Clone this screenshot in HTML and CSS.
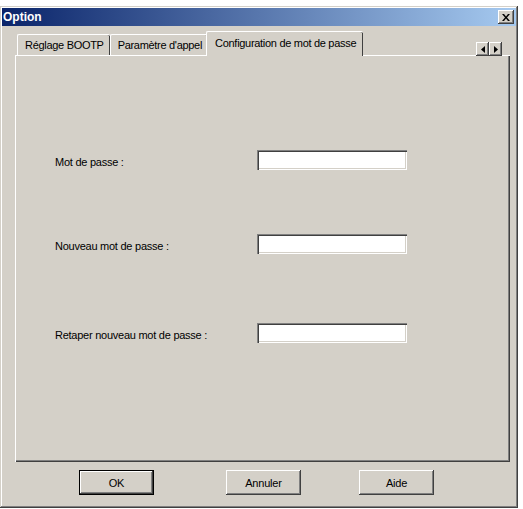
FILE: index.html
```html
<!DOCTYPE html>
<html lang="fr">
<head>
  <meta charset="UTF-8" />
  <title>Option</title>
  <link rel="stylesheet" href="styles.css">
</head>
<body>

  <div class="window">
    <!-- Barre de titre -->
    <div class="titlebar">
      <span class="title">Option</span>
      <span class="close">
        <svg width="8" height="7" viewBox="0 0 8 7"><path d="M0 0h2l2 2.5L6 0h2L5 3.5 8 7H6L4 4.5 2 7H0l3-3.5z" fill="#000"/></svg>
      </span>
    </div>

    <div class="content">
      <!-- Onglets -->
      <div class="tabs">
        <div class="tab">Réglage BOOTP</div>
        <div class="tab">Paramètre d'appel</div>
        <div class="tab active">Configuration de mot de passe</div>
        <div class="spin">
          <span class="spin-btn"><svg width="4" height="7" viewBox="0 0 4 7"><path d="M4 0v7L0 3.5z" fill="#000"/></svg></span>
          <span class="spin-btn"><svg width="4" height="7" viewBox="0 0 4 7"><path d="M0 0v7l4-3.5z" fill="#000"/></svg></span>
        </div>
      </div>

      <div class="panel">
        <div class="row first">
          <label class="label">Mot de passe :</label>
          <div class="field"></div>
        </div>
        <div class="row second">
          <label class="label">Nouveau mot de passe :</label>
          <div class="field"></div>
        </div>
        <div class="row third">
          <label class="label">Retaper nouveau mot de passe :</label>
          <div class="field"></div>
        </div>
      </div>

      <!-- Boutons -->
      <div class="buttons">
        <button class="btn default">OK</button>
        <button class="btn cancel">Annuler</button>
        <button class="btn help">Aide</button>
      </div>
    </div>
  </div>

</body>
</html>
```

FILE: styles.css
```css
* {
  box-sizing: border-box;
}

body {
  margin: 0;
  padding: 0;
  background: #fff;
  font-family: 'Liberation Sans', Arial, sans-serif;
  font-size: 11px;
  color: #000;
}

.window {
  margin-top: 6px;
  width: 518px;
  height: 502px;
  padding: 2px;
  background: #d4d0c8;
  box-shadow: inset -1px -1px #404040, inset 1px 1px #d4d0c8,
              inset -2px -2px #808080, inset 2px 2px #fff;
  display: flex;
  flex-direction: column;
}

.titlebar {
  height: 18px;
  background: linear-gradient(to right, #0a246a, #a6caf0);
  color: #fff;
  display: flex;
  align-items: center;
  justify-content: space-between;
  padding: 0 2px 0 1px;
}

.title {
  font-weight: bold;
  font-size: 12px;
}

.close {
  width: 16px;
  height: 14px;
  background: #d4d0c8;
  display: flex;
  align-items: center;
  justify-content: center;
  box-shadow: inset -1px -1px #404040, inset 1px 1px #fff, inset -2px -2px #808080;
}

.content {
  flex: 1;
  display: flex;
  flex-direction: column;
  padding: 6px 6px 0 13px;
}

.tabs {
  height: 24px;
  display: flex;
  align-items: flex-end;
  padding-left: 2px;
  position: relative;
  z-index: 1;
  margin-bottom: -1px;
}

.tab {
  height: 21px;
  padding: 4px 6px 0 7px;
  white-space: nowrap;
  letter-spacing: -0.3px;
  border-top: 1px solid #fff;
  border-left: 1px solid #fff;
  box-shadow: inset -1px 0 #404040;
  border-radius: 2px 2px 0 0;
  margin-bottom: 1px;
}

.tab.active {
  height: 25px;
  margin: 0 -2px 0 -2px;
  padding: 5px 7px 0 8px;
  background: #d4d0c8;
}

.spin {
  margin-left: auto;
  margin-right: 8px;
  display: flex;
}

.spin-btn {
  width: 13px;
  height: 14px;
  display: flex;
  align-items: center;
  justify-content: center;
  box-shadow: inset -1px -1px #404040, inset 1px 1px #fff, inset -2px -2px #808080;
}

.panel {
  height: 407px;
  padding: 94px 0 0 39px;
  border-top: 1px solid #fff;
  border-left: 1px solid #fff;
  box-shadow: inset -1px -1px #404040, inset -2px -2px #808080;
}

.row {
  display: flex;
  align-items: center;
  height: 20px;
}

.row.second {
  margin-top: 64px;
}

.row.third {
  margin-top: 69px;
}

.label {
  width: 202px;
  padding-top: 3px;
  letter-spacing: -0.25px;
}

.field {
  width: 150px;
  height: 20px;
  background: #fff;
  box-shadow: inset 1px 1px #808080, inset 2px 2px #404040,
              inset -1px -1px #fff, inset -2px -2px #d4d0c8;
}

.buttons {
  display: flex;
  margin-top: 8px;
  margin-left: -13px;
}

.btn {
  width: 75px;
  height: 25px;
  padding: 0;
  border: none;
  background: #d4d0c8;
  font-family: 'Liberation Sans', Arial, sans-serif;
  font-size: 11px;
  letter-spacing: -0.2px;
  color: #000;
  box-shadow: inset -1px -1px #404040, inset 1px 1px #fff, inset -2px -2px #808080;
}

.btn.default {
  margin-left: 77px;
  border: 1px solid #000;
}

.btn.cancel {
  margin-left: 72px;
}

.btn.help {
  margin-left: 58px;
}
```
